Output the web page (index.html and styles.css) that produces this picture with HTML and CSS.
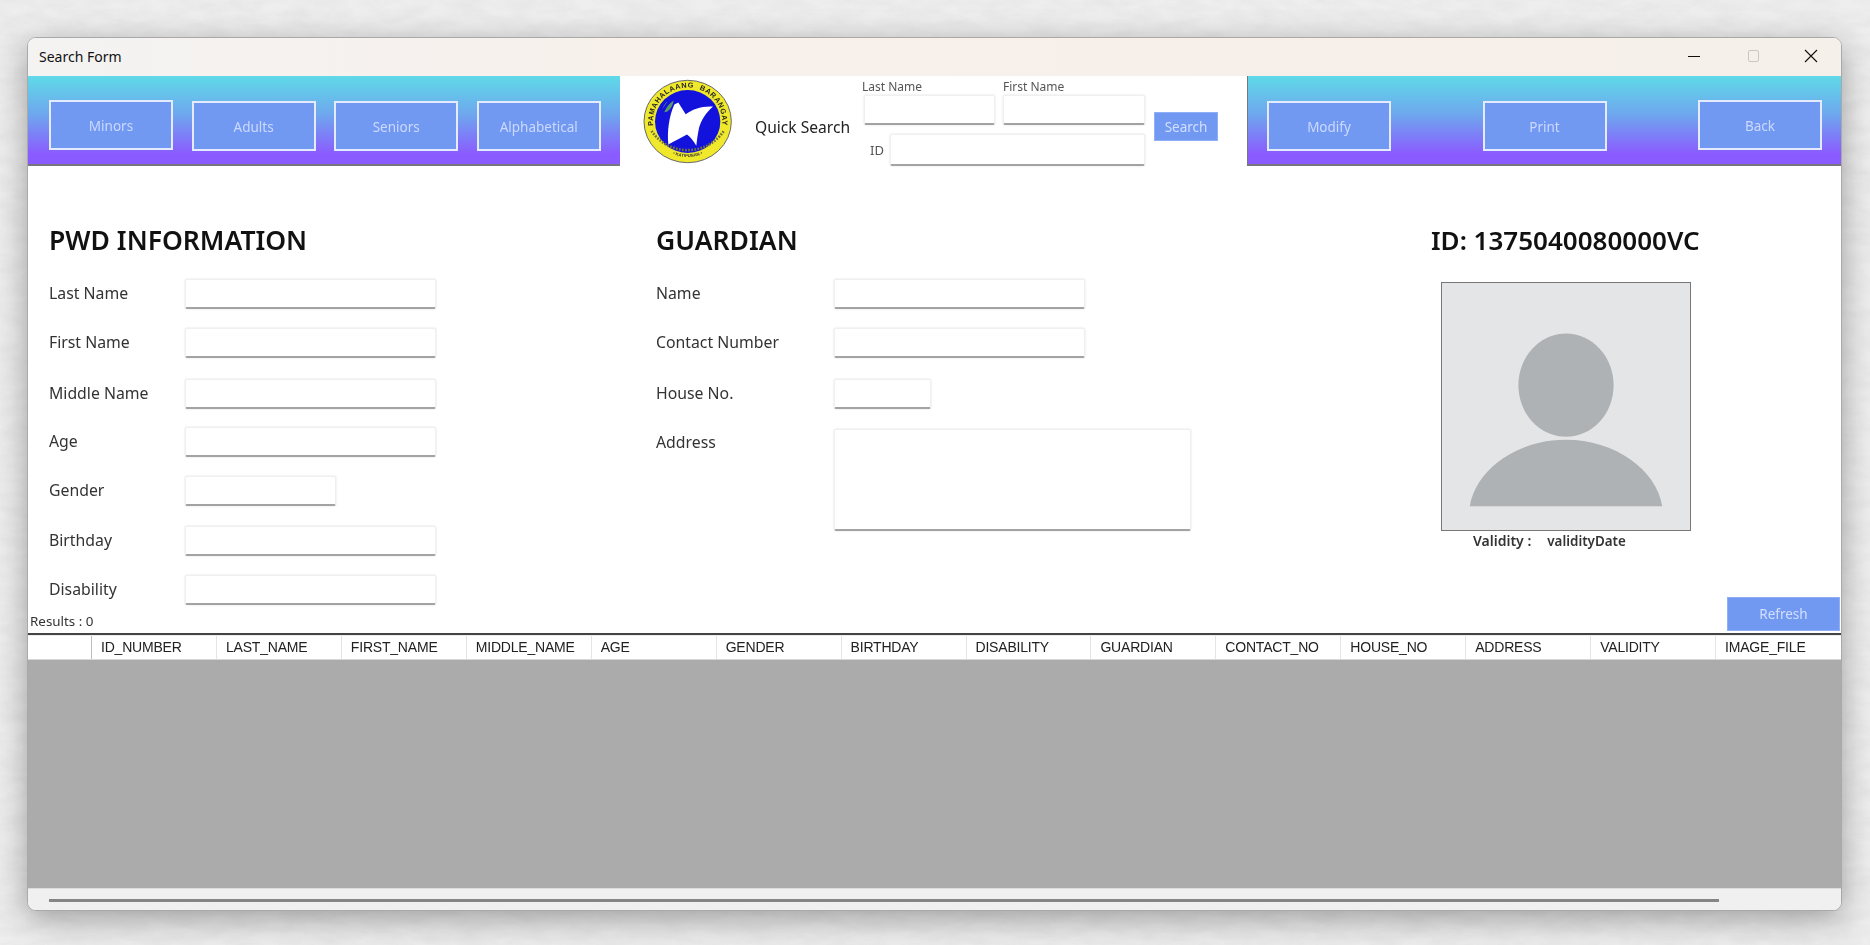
FILE: index.html
```html
<!DOCTYPE html>
<html lang="en">
<head>
  <meta charset="UTF-8" />
  <title>Search Form</title>
  <link rel="stylesheet" href="styles.css">
</head>
<body>
  <svg class="paper" aria-hidden="true">
    <filter id="paperGrain">
      <feTurbulence type="fractalNoise" baseFrequency="0.035 0.09" numOctaves="4" seed="7" />
      <feColorMatrix values="0 0 0 0 0.62  0 0 0 0 0.62  0 0 0 0 0.62  0.42 0 0 0 -0.14" />
    </filter>
    <rect width="100%" height="100%" filter="url(#paperGrain)" />
  </svg>

  <div class="window">
    <div class="titlebar">
      <span class="title">Search Form</span>
      <div class="win-controls">
        <svg width="14" height="14" viewBox="0 0 14 14"><path d="M1 7.5h12" stroke="#111" stroke-width="1.1" /></svg>
        <svg width="14" height="14" viewBox="0 0 14 14"><rect x="2.5" y="1.5" width="10" height="11" rx="1.5" fill="none" stroke="#c9c7c5" /></svg>
        <svg width="14" height="14" viewBox="0 0 14 14"><path d="M1 1l12 12M13 1L1 13" stroke="#111" stroke-width="1.1" /></svg>
      </div>
    </div>

    <div class="toolbar">
      <div class="tool-group tool-left">
        <button class="tool-btn raised">Minors</button>
        <button class="tool-btn">Adults</button>
        <button class="tool-btn">Seniors</button>
        <button class="tool-btn">Alphabetical</button>
      </div>

      <div class="quick">
        <svg class="logo" viewBox="40 20 270 260" preserveAspectRatio="none">
          <defs>
            <path id="logoTop" d="M89 210A104 104 0 1 1 259 210" />
            <path id="logoBottom" d="M80 204A108 108 0 0 0 268 204" />
          </defs>
          <ellipse cx="174" cy="150" rx="131" ry="126" fill="#f0e82a" stroke="#666" stroke-width="3" />
          <ellipse cx="174" cy="150" rx="98" ry="96" fill="#1212dc" />
          <text class="logo-top"><textPath href="#logoTop" startOffset="50%" text-anchor="middle">PAMAHALAANG  BARANGAY</textPath></text>
          <text class="logo-bottom"><textPath href="#logoBottom" startOffset="50%" text-anchor="middle">• KATIPUNAN •</textPath></text>
          <path d="M92 172A98 98 0 0 0 256 172" transform="translate(174 150) scale(1.32) translate(-174 -150)" fill="none" stroke="#6f7040" stroke-width="6" stroke-dasharray="4 3" />
          <path d="M104 122c6-16 14-26 28-36-2 14-8 26-20 34zM98 112c4-10 8-18 16-24" fill="#5d9a63" />
          <path d="M134 98L146 92 168 128C188 112 216 102 250 104 230 122 214 146 208 170 204 190 202 206 200 224 190 208 182 198 172 190 156 198 136 210 116 220 112 180 118 134 134 98z" fill="#fff" />
        </svg>
        <span class="quick-title">Quick Search</span>
        <div class="quick-fields">
          <label class="q-last"><span>Last Name</span><input type="text"></label>
          <label class="q-first"><span>First Name</span><input type="text"></label>
          <label class="q-id"><span>ID</span><input type="text"></label>
        </div>
        <button class="search-btn">Search</button>
      </div>

      <div class="tool-group tool-right">
        <button class="tool-btn">Modify</button>
        <button class="tool-btn">Print</button>
        <button class="tool-btn raised">Back</button>
      </div>
    </div>

    <div class="content">
      <section class="panel panel-pwd">
        <h2>PWD INFORMATION</h2>
        <div class="fields">
          <label>Last Name</label><input type="text">
          <label>First Name</label><input type="text">
          <label>Middle Name</label><input type="text">
          <label>Age</label><input type="text">
          <label>Gender</label><input type="text" class="w-gender">
          <label>Birthday</label><input type="text">
          <label>Disability</label><input type="text">
        </div>
      </section>

      <section class="panel panel-guardian">
        <h2>GUARDIAN</h2>
        <div class="fields">
          <label>Name</label><input type="text">
          <label>Contact Number</label><input type="text">
          <label>House No.</label><input type="text" class="w-house">
          <label class="label-top">Address</label><textarea></textarea>
        </div>
      </section>

      <section class="panel panel-id">
        <h2>ID: 1375040080000VC</h2>
        <div class="photo">
          <svg viewBox="0 0 250 249" width="248" height="247">
            <ellipse cx="125" cy="103" rx="48" ry="52" fill="#aeb2b5" />
            <path d="M28 225C34 188 76 158 125 158s91 30 97 67z" fill="#aeb2b5" />
          </svg>
        </div>
        <div class="validity"><b>Validity :</b><span>validityDate</span></div>
      </section>
    </div>

    <div class="status">
      <span class="results">Results : 0</span>
      <button class="refresh-btn">Refresh</button>
    </div>

    <div class="grid-view">
      <div class="grid-head">
        <div class="corner"></div>
        <div>ID_NUMBER</div>
        <div>LAST_NAME</div>
        <div>FIRST_NAME</div>
        <div>MIDDLE_NAME</div>
        <div>AGE</div>
        <div>GENDER</div>
        <div>BIRTHDAY</div>
        <div>DISABILITY</div>
        <div>GUARDIAN</div>
        <div>CONTACT_NO</div>
        <div>HOUSE_NO</div>
        <div>ADDRESS</div>
        <div>VALIDITY</div>
        <div>IMAGE_FILE</div>
      </div>
      <div class="grid-body"></div>
      <div class="hscroll"><div class="hscroll-thumb"></div></div>
    </div>
  </div>
</body>
</html>
```

FILE: styles.css
```css
*, *::before, *::after { box-sizing: border-box; }

html, body { height: 100%; }

body {
  margin: 0;
  padding: 37px 28px 34px 27px;
  background: #eeeeee;
  font-family: "Noto Sans", "Open Sans", sans-serif;
  color: #222;
  overflow: hidden;
}

.paper {
  position: fixed;
  inset: 0;
  width: 100%;
  height: 100%;
}

/* window */
.window {
  position: relative;
  height: 874px;
  display: flex;
  flex-direction: column;
  background: #fff;
  border: 1px solid #a9a9a9;
  border-radius: 9px;
  overflow: hidden;
  box-shadow: 0 8px 32px rgba(0, 0, 0, .34);
}

.titlebar {
  flex: none;
  height: 38px;
  display: flex;
  align-items: center;
  justify-content: space-between;
  padding: 0 23px 2px 11px;
  background: linear-gradient(90deg, #f4f3f2, #f8f0ea 40%, #f6f0ea);
}
.title { font-size: 14px; color: #111; }
.win-controls { display: flex; gap: 44.5px; }

/* toolbar */
.toolbar {
  flex: none;
  height: 90px;
  display: flex;
}
.tool-group {
  display: flex;
  align-items: flex-start;
  background: linear-gradient(180deg, #5fdae8, #6fa5ee 45%, #8a5cff 88%);
  border-bottom: 2px solid #77757f;
  padding-top: 25px;
}
.tool-left {
  width: 592px;
  padding-left: 21px;
  gap: 18.6px;
}
.tool-right {
  width: 594px;
  padding-left: 19px;
  gap: 91.5px;
  border-left: 1px solid #777;
}
.tool-btn {
  width: 124px;
  height: 50px;
  background: #7299f2;
  border: 2px solid #e4ebff;
  color: #ccd9ff;
  font: 13.5px "Noto Sans", sans-serif;
  padding: 2px 0 0;
}
.tool-btn.raised { margin-top: -1px; }

.quick {
  flex: 1;
  display: flex;
  align-items: flex-start;
}
.logo {
  width: 90px;
  height: 85px;
  margin: 3px 0 0 23px;
  flex: none;
  filter: blur(.4px);
}
.logo-top { font: 700 22px "Liberation Sans", sans-serif; fill: #222; white-space: pre; letter-spacing: 2px; }
.logo-bottom { font: 700 13px "Liberation Sans", sans-serif; fill: #333; }

.quick-title {
  width: 96px;
  margin: 40px 0 0 22px;
  font-size: 15.6px;
  color: #222;
  white-space: nowrap;
  flex: none;
}
.quick-fields {
  width: 281px;
  margin: 2px 0 0 13px;
  display: grid;
  grid-template-columns: 131px 1fr;
  flex: none;
}
.quick-fields label { display: block; }
.quick-fields label span {
  display: block;
  font-size: 12px;
  line-height: 17px;
  color: #555;
}
.q-last span { margin-left: -2px; }
.q-first { margin-left: 8px; }
.quick-fields input { width: 100%; height: 30px; }
.quick-fields .q-id {
  grid-column: 1 / 3;
  display: flex;
  align-items: center;
  margin-top: 9px;
  padding-left: 6px;
}
.quick-fields .q-id span { width: 20px; flex: none; margin: 0; font-size: 13px; }
.q-id input { flex: 1; height: 32px; }

.search-btn, .refresh-btn {
  background: #7299f2;
  border: 1px solid #8fb0f7;
  color: #d3dfff;
  font: 13.5px "Noto Sans", sans-serif;
  padding: 0;
}
.search-btn {
  width: 64px;
  height: 29px;
  margin: 36px 0 0 9px;
  flex: none;
}

/* form */
input[type="text"], textarea {
  display: block;
  background: #fff;
  border: 1px solid #f0f0f0;
  border-bottom: 2px solid #a3a3a3;
  border-radius: 2px;
  box-shadow: 0 0 2px rgba(0, 0, 0, .16);
  padding: 0;
  margin: 0;
  resize: none;
}

.content {
  flex: none;
  height: 431px;
  display: flex;
}
.panel { padding-top: 57px; flex: none; }
.panel h2 {
  margin: 0;
  height: 36px;
  line-height: 34px;
  font-size: 26.5px;
  font-weight: 600;
  color: #111;
  white-space: nowrap;
}
.panel-pwd { width: 628px; padding-left: 21px; }
.panel-guardian { width: 775px; }

.fields {
  margin-top: 20px;
  display: grid;
  grid-template-rows: 49px 51px 48px 49px 50px 49px 30px;
  align-items: start;
  font-size: 15.8px;
  color: #333;
}
.fields label { line-height: 28px; }
.fields input { width: 251px; height: 30px; }
.panel-pwd .fields { grid-template-columns: 136px 1fr; }
.panel-guardian .fields { grid-template-columns: 178px 1fr; }
.fields .w-gender { width: 151px; }
.fields .w-house { width: 97px; }
.fields textarea { width: 357px; height: 102px; margin-top: 2px; grid-row: span 3; }
.label-top { padding-top: 1px; }

.panel-id { width: 410px; }
.panel-id h2 { font-size: 26px; }
.photo {
  width: 250px;
  height: 249px;
  margin: 23px 0 0 10px;
  background: #e4e5e7;
  border: 1px solid #777;
}
.photo svg { display: block; }
.validity {
  margin: 1px 0 0 42px;
  display: flex;
  gap: 16px;
  align-items: baseline;
  font-size: 13.4px;
  line-height: 18px;
  font-weight: 600;
  color: #333;
}
.validity b { font-size: 14px; font-weight: 600; }

.status {
  flex: none;
  height: 36px;
  display: flex;
  justify-content: space-between;
  align-items: flex-start;
  padding: 0 1px 0 2px;
}
.results { margin-top: 15px; font-size: 13.4px; line-height: 18px; color: #333; }
.refresh-btn { width: 113px; height: 34px; }

/* datagrid */
.grid-view {
  flex: 1;
  min-height: 0;
  display: flex;
  flex-direction: column;
  border-top: 2px solid #444;
}
.grid-head {
  flex: none;
  height: 25px;
  display: grid;
  grid-template-columns: 64px repeat(14, 1fr);
  background: #fff;
  border-top: 1px solid #eee;
  border-bottom: 1px solid #d8d8d8;
  font: 14px/22px "Liberation Sans", Arial, sans-serif;
  letter-spacing: -.2px;
  color: #222;
}
.grid-head div {
  padding-left: 9px;
  border-right: 1px solid #e4e4e4;
  white-space: nowrap;
  overflow: hidden;
}
.grid-head div:last-child { border-right: none; }
.grid-head .corner { border-right: 1px solid #bdbdbd; }
.grid-body { flex: 1; background: #ababab; }
.hscroll {
  flex: none;
  height: 22px;
  padding: 10px 0 0 21px;
  background: #f0f0f0;
  border-top: 1px solid #dcdcdc;
}
.hscroll-thumb { width: 1670px; height: 3px; background: #858585; }
```
